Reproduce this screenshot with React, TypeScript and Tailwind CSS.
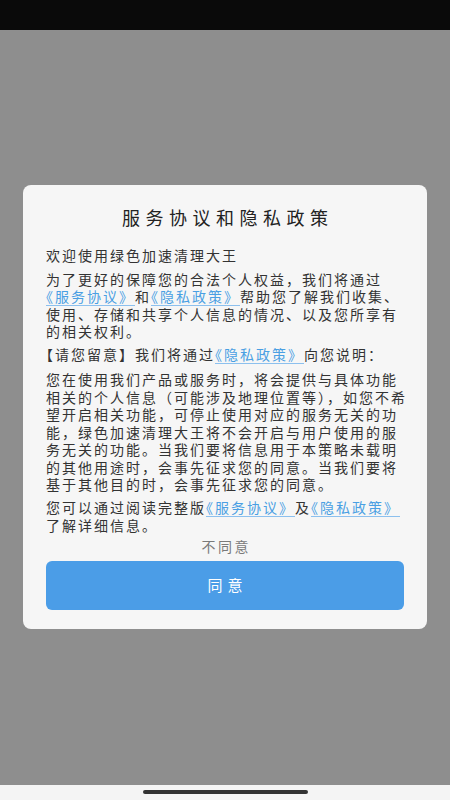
import React from "react";

const L = ({ children }: { children: React.ReactNode }) => (
  <span className="inline-block align-top leading-[17.5px] text-[#4a9fe3] underline decoration-1 underline-offset-[3px] decoration-[#8cc0ee]">
    {children}
  </span>
);

const Line = ({ children }: { children: React.ReactNode }) => (
  <div className="whitespace-nowrap h-[17.5px]">{children}</div>
);

export default function App() {
  return (
    <div
      className="w-[450px] h-[800px] flex flex-col bg-[#8e8e8e] overflow-hidden"
      style={{ fontFamily: '"Noto Sans CJK SC", "Noto Sans", sans-serif' }}
    >
      <div className="h-[30px] bg-[#0a0a0a] shrink-0" />
      <div className="flex-1 pt-[155px] pl-[23px]">
        <div className="w-[404px] rounded-[8px] bg-[#f6f6f6] px-[23px] pt-[20px] pb-[19px]">
          <div className="text-center text-[18px] leading-[24px] tracking-[5.5px] pl-[5.5px] text-[#222222]">
            服务协议和隐私政策
          </div>
          <div className="text-[14px] leading-[17.5px] tracking-[2px] text-[#333333] [text-spacing-trim:trim-start]">
            <div className="mt-[18px]">
              <Line>欢迎使用绿色加速清理大王</Line>
            </div>
            <div className="mt-[6px]">
              <Line>为了更好的保障您的合法个人权益，我们将通过</Line>
              <Line>
                <L>《服务协议》</L>和<L>《隐私政策》</L>帮助您了解我们收集、
              </Line>
              <Line>使用、存储和共享个人信息的情况、以及您所享有</Line>
              <Line>的相关权利。</Line>
            </div>
            <div className="mt-[5px]">
              <Line>
                【请您留意】我们将通过<L>《隐私政策》</L>向您说明：
              </Line>
            </div>
            <div className="mt-[8px]">
              <Line>您在使用我们产品或服务时，将会提供与具体功能</Line>
              <Line>相关的个人信息（可能涉及地理位置等），如您不希</Line>
              <Line>望开启相关功能，可停止使用对应的服务无关的功</Line>
              <Line>能，绿色加速清理大王将不会开启与用户使用的服</Line>
              <Line>务无关的功能。当我们要将信息用于本策略未载明</Line>
              <Line>的其他用途时，会事先征求您的同意。当我们要将</Line>
              <Line>基于其他目的时，会事先征求您的同意。</Line>
            </div>
            <div className="mt-[5.5px]">
              <Line>
                您可以通过阅读完整版<L>《服务协议》</L>及<L>《隐私政策》</L>
              </Line>
              <Line>了解详细信息。</Line>
            </div>
          </div>
          <div className="mt-[2px] text-center text-[14px] leading-[20px] tracking-[2.5px] pl-[2.5px] text-[#7a7a7a]">
            不同意
          </div>
          <button className="mt-[4.5px] w-full h-[49px] rounded-[6px] bg-[#4b9de7] text-white text-[15px] tracking-[5px] pl-[5px] flex items-center justify-center">
            同意
          </button>
        </div>
      </div>
      <div className="h-[15px] shrink-0 bg-[#f4f4f4] flex justify-center pt-[5px]">
        <div className="w-[165px] h-[4px] rounded-full bg-[#333333]" />
      </div>
    </div>
  );
}
